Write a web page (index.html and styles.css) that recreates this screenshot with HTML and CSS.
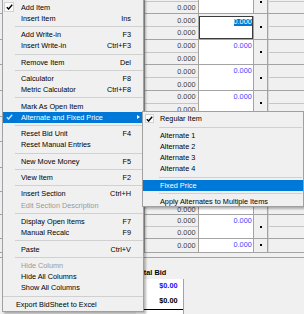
FILE: index.html
```html
<!DOCTYPE html>
<html>
    <head>
        <meta charset="utf-8">
        <title>BidSheet</title>
        <link rel="stylesheet" href="styles.css">
    </head>
    <body>
        <div id="sheet">
            <div id="grid">
                <!-- rows under the submenu are left blank, they can't be seen -->
                <div class="grp first">
                    <div class="desc"></div>
                    <div class="qty"><div class="sub"></div><div class="sub">0.000</div></div>
                    <div class="price"><div class="val"></div></div>
                    <div class="mark"><span class="dot"></span></div>
                    <div class="extra"><div class="sub"></div><div class="sub"></div></div>
                </div>
                <div class="grp">
                    <div class="desc"></div>
                    <div class="qty"><div class="sub">0.000</div><div class="sub">0.000</div></div>
                    <div class="price editing"><div class="val"><span class="sel">0.000</span></div></div>
                    <div class="mark"><span class="dot"></span></div>
                    <div class="extra"><div class="sub"></div><div class="sub"></div></div>
                </div>
                <div class="grp">
                    <div class="desc"></div>
                    <div class="qty"><div class="sub">0.000</div><div class="sub">0.000</div></div>
                    <div class="price"><div class="val">0.000</div></div>
                    <div class="mark"><span class="dot"></span></div>
                    <div class="extra"><div class="sub"></div><div class="sub"></div></div>
                </div>
                <div class="grp">
                    <div class="desc"></div>
                    <div class="qty"><div class="sub">0.000</div><div class="sub">0.000</div></div>
                    <div class="price"><div class="val">0.000</div></div>
                    <div class="mark"><span class="dot"></span></div>
                    <div class="extra"><div class="sub"></div><div class="sub"></div></div>
                </div>
                <div class="grp">
                    <div class="desc"></div>
                    <div class="qty"><div class="sub">0.000</div><div class="sub">0.000</div></div>
                    <div class="price"><div class="val">0.000</div></div>
                    <div class="mark"><span class="dot"></span></div>
                    <div class="extra"><div class="sub"></div><div class="sub"></div></div>
                </div>
                <div class="grp">
                    <div class="desc"></div>
                    <div class="qty"><div class="sub"></div><div class="sub"></div></div>
                    <div class="price"><div class="val"></div></div>
                    <div class="mark"><span class="dot"></span></div>
                    <div class="extra"><div class="sub"></div><div class="sub"></div></div>
                </div>
                <div class="grp">
                    <div class="desc"></div>
                    <div class="qty"><div class="sub"></div><div class="sub"></div></div>
                    <div class="price"><div class="val"></div></div>
                    <div class="mark"><span class="dot"></span></div>
                    <div class="extra"><div class="sub"></div><div class="sub"></div></div>
                </div>
                <div class="grp short">
                    <div class="desc"></div>
                    <div class="qty"><div class="sub"></div><div class="sub"></div></div>
                    <div class="price"><div class="val"></div></div>
                    <div class="mark"><span class="dot"></span></div>
                    <div class="extra"><div class="sub"></div><div class="sub"></div></div>
                </div>
                <div class="grp short">
                    <div class="desc"></div>
                    <div class="qty"><div class="sub"></div><div class="sub">0.000</div></div>
                    <div class="price"><div class="val"></div></div>
                    <div class="mark"><span class="dot"></span></div>
                    <div class="extra"><div class="sub"></div><div class="sub"></div></div>
                </div>
                <div class="grp short">
                    <div class="desc"></div>
                    <div class="qty"><div class="sub">0.000</div><div class="sub">0.000</div></div>
                    <div class="price"><div class="val">0.000</div></div>
                    <div class="mark"><span class="dot"></span></div>
                    <div class="extra"><div class="sub"></div><div class="sub"></div></div>
                </div>
                <div class="grp single">
                    <div class="desc"></div>
                    <div class="qty"><div class="sub">0.000</div></div>
                    <div class="price"><div class="val">0.000</div></div>
                    <div class="mark"><span class="dot"></span></div>
                    <div class="extra"><div class="sub"></div></div>
                </div>
            </div><!-- end grid -->

            <div id="totals">
                <div class="tot-col">
                    <div class="tot-label">Total Bid</div>
                    <div class="tot-box">
                        <div class="tot-row blue">$0.00</div>
                        <div class="tot-row">$0.00</div>
                        <div class="tot-row"></div>
                    </div>
                </div>
            </div>
        </div><!-- end sheet -->

        <div id="menu" class="popup">
            <div class="item"><span class="chk"><svg width="7" height="6" viewBox="0 0 7 6"><path d="M0.8 3.2 L2.6 5 L6.2 0.8" fill="none" stroke="#000" stroke-width="1.4"/></svg></span><span>Add Item</span></div>
            <div class="item"><span>Insert Item</span><span>Ins</span></div>
            <div class="sep"></div>
            <div class="item"><span>Add Write-in</span><span>F3</span></div>
            <div class="item"><span>Insert Write-in</span><span>Ctrl+F3</span></div>
            <div class="sep"></div>
            <div class="item"><span>Remove Item</span><span>Del</span></div>
            <div class="sep"></div>
            <div class="item"><span>Calculator</span><span>F8</span></div>
            <div class="item"><span>Metric Calculator</span><span>Ctrl+F8</span></div>
            <div class="sep"></div>
            <div class="item"><span>Mark As Open Item</span></div>
            <div class="item on"><span class="chk bare"><svg width="7" height="6" viewBox="0 0 7 6"><path d="M0.8 3.2 L2.6 5 L6.2 0.8" fill="none" stroke="#cfe2f6" stroke-width="1.4"/></svg></span><span>Alternate and Fixed Price</span><span class="arrow"></span></div>
            <div class="sep"></div>
            <div class="item"><span>Reset Bid Unit</span><span>F4</span></div>
            <div class="item"><span>Reset Manual Entries</span></div>
            <div class="sep"></div>
            <div class="item"><span>New Move Money</span><span>F5</span></div>
            <div class="sep"></div>
            <div class="item"><span>View Item</span><span>F2</span></div>
            <div class="sep"></div>
            <div class="item"><span>Insert Section</span><span>Ctrl+H</span></div>
            <div class="item off"><span>Edit Section Description</span></div>
            <div class="sep"></div>
            <div class="item"><span>Display Open Items</span><span>F7</span></div>
            <div class="item"><span>Manual Recalc</span><span>F9</span></div>
            <div class="sep"></div>
            <div class="item"><span>Paste</span><span>Ctrl+V</span></div>
            <div class="sep"></div>
            <div class="item off"><span>Hide Column</span></div>
            <div class="item"><span>Hide All Columns</span></div>
            <div class="item"><span>Show All Columns</span></div>
            <div class="sep full"></div>
            <div class="item export"><span>Export BidSheet to Excel</span></div>
        </div><!-- end menu -->

        <div id="submenu" class="popup">
            <div class="item"><span class="chk"><svg width="7" height="6" viewBox="0 0 7 6"><path d="M0.8 3.2 L2.6 5 L6.2 0.8" fill="none" stroke="#000" stroke-width="1.4"/></svg></span><span>Regular Item</span></div>
            <div class="sep"></div>
            <div class="item"><span>Alternate 1</span></div>
            <div class="item"><span>Alternate 2</span></div>
            <div class="item"><span>Alternate 3</span></div>
            <div class="item"><span>Alternate 4</span></div>
            <div class="sep"></div>
            <div class="item on"><span>Fixed Price</span></div>
            <div class="sep"></div>
            <div class="item"><span>Apply Alternates to Multiple Items</span></div>
        </div><!-- end submenu -->
    </body>
</html>
```

FILE: styles.css
```css
*{
    font-family: "Liberation Sans", Arial, sans-serif;
}

html, body{
    margin: 0;
    padding: 0;
}

body{
    width: 304px;
    height: 314px;
    overflow: hidden;
    position: relative;
    background-color: #f0f0f0;
    font-size: 7.3px;
    color: #000;
}

/* grid behind the menu */

#grid{
    display: flex;
    flex-direction: column;
}

.grp{
    display: flex;
    height: 25.6px;
    flex-shrink: 0;
    box-sizing: border-box;
    border-bottom: 1px solid #a3a3a3;
}

.grp.first{
    margin-top: -9.5px;
    height: 23.8px;
}

.grp.short{
    height: 23.8px;
}

.grp.single{
    height: 13.4px;
}

.grp > div{
    box-sizing: border-box;
    border-right: 1px solid #a3a3a3;
}

.desc{
    width: 145px;
    background-color: #eceef2;
}

.qty{
    width: 53.5px;
    display: flex;
    flex-direction: column;
    color: #3a3a3a;
}

.qty .sub, .extra .sub{
    flex: 1;
    text-align: right;
    padding-right: 2px;
    display: flex;
    align-items: center;
    justify-content: flex-end;
}

.qty .sub:first-child, .extra .sub:first-child{
    border-bottom: 1px solid #c6c6c6;
}

.qty .sub:only-child, .extra .sub:only-child{
    border-bottom: none;
}

.price{
    width: 55.8px;
    background-color: #fff;
    color: #4141ff;
    text-align: right;
    padding-right: 1.5px;
}

.price .val{
    height: 12.3px;
    line-height: 12.3px;
}

.short .price .val{
    height: 11.9px;
    line-height: 11.9px;
}

.single .price .val{
    height: 12.4px;
    line-height: 12.4px;
}

.price.editing{
    box-shadow: inset 0 0 0 1px #3c3c3c;
    margin-top: 1.3px;
}

.price.editing .val{
    padding-top: 0.4px;
}

.sel{
    background-color: #0078d7;
    color: #fff;
    display: inline-block;
    line-height: 6.8px;
    padding-top: 0.2px;
}

.mark{
    width: 14px;
    display: flex;
    align-items: center;
    justify-content: center;
}

.dot{
    width: 2px;
    height: 2px;
    background-color: #000;
}

.extra{
    flex: 1;
    display: flex;
    flex-direction: column;
    border-right: none !important;
    border-left: 1px solid #d8d8d8;
}

/* totals panel */

#totals{
    margin-top: 4.3px;
    border-top: 1px solid #a3a3a3;
}

.tot-col{
    margin-left: 135.5px;
    width: 48px;
    padding-top: 8.8px;
}

.tot-label{
    font-weight: bold;
    line-height: 11px;
    height: 11px;
    white-space: nowrap;
}

.tot-box{
    margin-top: 1.7px;
    background-color: #fff;
    border-right: 1px solid #a3a3a3;
}

.tot-row{
    height: 14.8px;
    line-height: 14.8px;
    text-align: right;
    padding-right: 5px;
    font-weight: bold;
}

.tot-row.blue{
    color: #1414ff;
}

.tot-row:nth-child(2){
    border-bottom: 1px solid #000;
}

/* context menu */

.popup{
    position: absolute;
    box-sizing: border-box;
    border: 1px solid #a0a0a0;
    background-color: #f0f0f0;
    box-shadow: 2px 2px 2px rgba(0, 0, 0, 0.28);
}

#menu{
    left: 2px;
    top: -2px;
    width: 142px;
    padding: 2.5px 0 1px 0;
}

#submenu{
    left: 142px;
    top: 111px;
    width: 162px;
    height: 96px;
    padding-top: 1.4px;
    overflow: hidden;
}

.item{
    position: relative;
    display: flex;
    justify-content: space-between;
    height: 11.2px;
    line-height: 11.2px;
    padding: 0 12px 0 18px;
    white-space: nowrap;
}

#submenu .item{
    padding-left: 17px;
}

.item.on{
    background-color: #0078d7;
    color: #fff;
}

.item.off{
    color: #9a9a9a;
}

.item.export{
    padding-left: 13px;
}

.chk{
    position: absolute;
    left: 1px;
    top: 0.6px;
    width: 10px;
    height: 10px;
    box-sizing: border-box;
    border: 1px solid #d2d2d2;
    background-color: #fcfcfc;
    display: flex;
    align-items: center;
    justify-content: center;
}

#submenu .chk{
    left: 2px;
    width: 9px;
    height: 9.5px;
}

.chk.bare{
    border: none;
    background: none;
}

.arrow{
    position: absolute;
    right: 3.5px;
    top: 3.4px;
    width: 0;
    height: 0;
    border-left: 3.5px solid #fff;
    border-top: 2.2px solid transparent;
    border-bottom: 2.2px solid transparent;
}

.sep{
    position: relative;
    height: 5.2px;
    margin-left: 12px;
}

.sep::after{
    content: '';
    position: absolute;
    left: 0;
    right: 0;
    top: 2.1px;
    height: 1px;
    background-color: #d0d0d0;
}

.sep.full{
    margin-left: 0;
}

#submenu .sep{
    margin: 0 1px 0 16px;
}
```
